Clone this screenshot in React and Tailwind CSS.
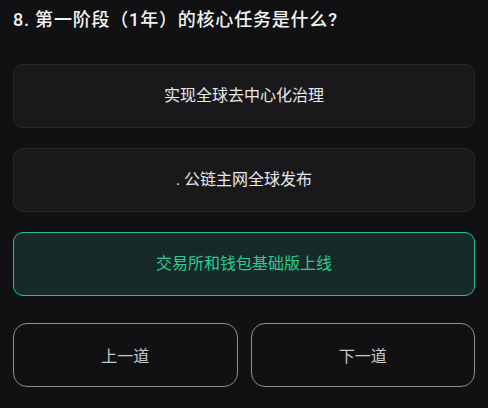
export default function App() {
  const font = { fontFamily: 'Roboto, "Noto Sans CJK SC", "Noto Sans", sans-serif' };
  return (
    <div className="w-[488px] h-[408px] bg-[#111113] px-[13px] pt-[7px] flex flex-col" style={font}>
      <div className="text-[18px] leading-[26px] text-[#f2f2f2] font-medium tracking-[0.8px]">8. 第一阶段（1年）的核心任务是什么?</div>
      <div className="mt-[31px] flex flex-col gap-[20px]">
        <div className="h-[64px] rounded-[10px] bg-[#19191b] border border-[#2a2a2c] flex items-center justify-center text-[16px] text-[#e8e8e8]">实现全球去中心化治理</div>
        <div className="h-[64px] rounded-[10px] bg-[#19191b] border border-[#2a2a2c] flex items-center justify-center text-[16px] text-[#e8e8e8]">. 公链主网全球发布</div>
        <div className="h-[64px] rounded-[10px] bg-[#18292a] border border-[#22c48e] flex items-center justify-center text-[16px] text-[#2bcb94]">交易所和钱包基础版上线</div>
      </div>
      <div className="mt-[27px] grid grid-cols-2 gap-[13px]">
        <div className="h-[64px] rounded-[14px] border-[1.5px] border-[#8e8e90] flex items-center justify-center pt-[3px] text-[16px] text-[#c8c8c8]">上一道</div>
        <div className="h-[64px] rounded-[14px] border-[1.5px] border-[#8e8e90] flex items-center justify-center pt-[3px] text-[16px] text-[#c8c8c8]">下一道</div>
      </div>
    </div>
  );
}
